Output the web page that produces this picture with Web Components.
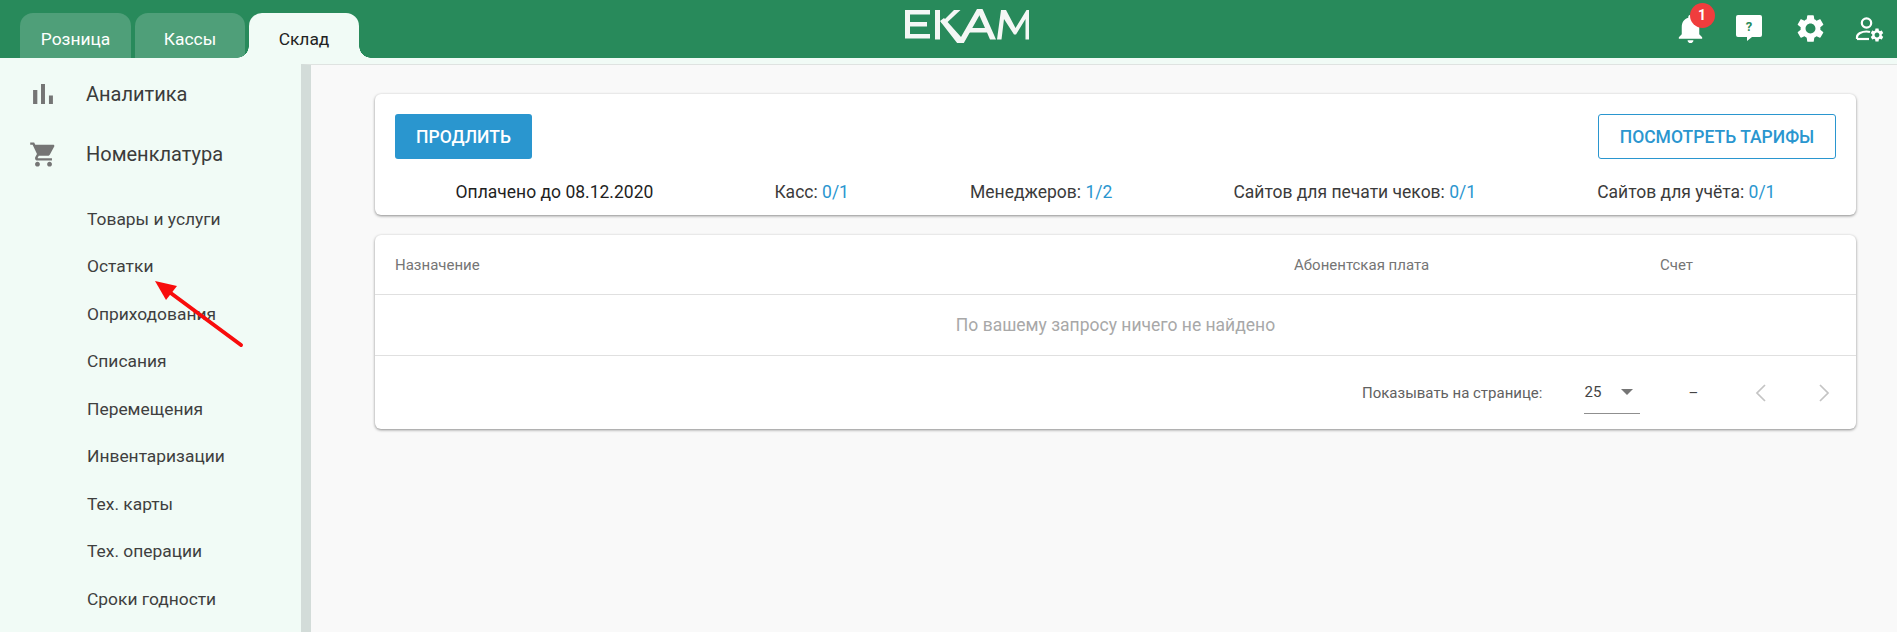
<!DOCTYPE html>
<html lang="ru">
<head>
<meta charset="utf-8">
<title>EKAM</title>
<style>
  html, body { margin: 0; height: 100%; overflow: hidden; }
  body { background: #f1fbf6; font-family: Roboto, "Liberation Sans", sans-serif; color: #333; }
  #app { display: flex; flex-direction: column; height: 632px; position: relative; }
  #columns { display: flex; flex: 1; min-height: 0; padding-top: 6px; }
</style>
</head>
<body>
<div id="app">
  <ek-header></ek-header>
  <div id="columns">
    <ek-sidebar>
      <ek-nav-top icon="bars" size="34">Аналитика</ek-nav-top>
      <ek-nav-top icon="cart" size="29">Номенклатура</ek-nav-top>
      <ek-nav-sub class="first">Товары и услуги</ek-nav-sub>
      <ek-nav-sub>Остатки</ek-nav-sub>
      <ek-nav-sub>Оприходования</ek-nav-sub>
      <ek-nav-sub>Списания</ek-nav-sub>
      <ek-nav-sub>Перемещения</ek-nav-sub>
      <ek-nav-sub>Инвентаризации</ek-nav-sub>
      <ek-nav-sub>Тех. карты</ek-nav-sub>
      <ek-nav-sub>Тех. операции</ek-nav-sub>
      <ek-nav-sub>Сроки годности</ek-nav-sub>
    </ek-sidebar>
    <ek-main>
      <ek-tariff-card></ek-tariff-card>
      <ek-bills-table></ek-bills-table>
    </ek-main>
  </div>
  <ek-arrow></ek-arrow>
</div>

<script>
const ICONS = {
  bars: 'M5 9.2h3V19H5zM10.6 5h2.8v14h-2.8zm5.6 8H19v6h-2.8z',
  cart: 'M7 18c-1.1 0-1.99.9-1.99 2S5.9 22 7 22s2-.9 2-2-.9-2-2-2zM1 2v2h2l3.6 7.59-1.35 2.45c-.16.28-.25.61-.25.96 0 1.1.9 2 2 2h12v-2H7.42c-.14 0-.25-.11-.25-.25l.03-.12.9-1.63h7.45c.75 0 1.41-.41 1.75-1.03l3.58-6.49c.08-.14.12-.31.12-.48 0-.55-.45-1-1-1H5.21l-.94-2H1zm16 16c-1.1 0-1.99.9-1.99 2s.89 2 1.99 2 2-.9 2-2-.9-2-2-2z',
  bell: 'M12 22c1.1 0 2-.9 2-2h-4c0 1.1.9 2 2 2zm6-6v-5c0-3.07-1.63-5.64-4.5-6.32V4c0-.83-.67-1.5-1.5-1.5s-1.5.67-1.5 1.5v.68C7.64 5.36 6 7.92 6 11v5l-2 2v1h16v-1l-2-2z',
  gear: 'M19.14 12.94c.04-.3.06-.61.06-.94 0-.32-.02-.64-.07-.94l2.03-1.58c.18-.14.23-.41.12-.61l-1.92-3.32c-.12-.22-.37-.29-.59-.22l-2.39.96c-.5-.38-1.03-.7-1.62-.94l-.36-2.54c-.04-.24-.24-.41-.48-.41h-3.84c-.24 0-.43.17-.47.41l-.36 2.54c-.59.24-1.13.57-1.62.94l-2.39-.96c-.22-.08-.47 0-.59.22L2.74 8.87c-.12.21-.08.47.12.61l2.03 1.58c-.05.3-.09.63-.09.94s.02.64.07.94l-2.03 1.58c-.18.14-.23.41-.12.61l1.92 3.32c.12.22.37.29.59.22l2.39-.96c.5.38 1.03.7 1.62.94l.36 2.54c.05.24.24.41.48.41h3.84c.24 0 .44-.17.47-.41l.36-2.54c.59-.24 1.13-.56 1.62-.94l2.39.96c.22.08.47 0 .59-.22l1.92-3.32c.12-.22.07-.47-.12-.61l-2.01-1.58zM12 15.6c-1.98 0-3.6-1.62-3.6-3.6s1.62-3.6 3.6-3.6 3.6 1.62 3.6 3.6-1.62 3.6-3.6 3.6z'
};

// top bar: tabs, logo, action icons
class EkHeader extends HTMLElement {
  constructor() {
    super();
    const shadow = this.attachShadow({mode: 'open'});
    shadow.innerHTML = `<style>
      :host { display: flex; height: 58px; background: #288a5b; flex: none; position: relative; }
      .tabs { display: flex; gap: 4px; padding: 13px 0 0 20px; width: 339px; }
      .tab {
        width: 110px; height: 45px; box-sizing: border-box; padding-top: 7px;
        display: flex; align-items: center; justify-content: center;
        font-size: 17.400px; color: #fff; background: #4f9f79;
        border-radius: 13px 13px 0 0; position: relative;
      }
      .tab.first { width: 111px; }
      .tab.active { background: #f1fbf6; color: #222; z-index: 1; }
      .tab.active::before, .tab.active::after {
        content: ''; position: absolute; bottom: 0; width: 12px; height: 12px;
      }
      .tab.active::before { left: -12px; background: radial-gradient(circle at 0 0, transparent 11.5px, #f1fbf6 12px); }
      .tab.active::after { right: -12px; background: radial-gradient(circle at 100% 0, transparent 11.5px, #f1fbf6 12px); }
      .logo { margin: 9px 0 0 540px; width: 130px; height: 34px; }
      .actions { margin-left: auto; display: flex; align-items: flex-start; gap: 30px; padding: 13px 12px 0 0; }
      .action { position: relative; width: 30px; height: 30px; display: flex; align-items: center; justify-content: center; }
      svg { display: block; flex: none; }
      .badge {
        position: absolute; left: 14.500px; top: -10.500px; width: 25px; height: 25px; border-radius: 50%;
        background: #f03d3d; color: #fff; font-size: 14px; font-weight: 700;
        display: flex; align-items: center; justify-content: center;
      }
      .help { margin-left: -2px; }
      .qmark { font: 700 13px Roboto, sans-serif; fill: #288a5b; }
    </style>
    <div class="tabs">
      <div class="tab first">Розница</div>
      <div class="tab">Кассы</div>
      <div class="tab active">Склад</div>
    </div>
    <svg class="logo" viewBox="0 0 130 34" aria-label="EKAM logo">
      <g fill="#f4f7f5">
        <path d="M6 1h25v4.500H11v7.500h17v4.500H11v7.500h20v4.500H6z"/>
        <path d="M36 1h5v29.500h-5z"/>
        <path d="M55 1h6.500L47 14.500l-5-.5z"/>
        <path d="M41 13l4-3 17 19 16-28h6L62 40z" transform="translate(0 -1)"/>
        <path d="M78 1h6l13 29.500h-6l-3-7H68l3-4.500h15z"/>
        <path d="M98 30.500l4-29.500h5l9.500 18 11-18h4v29.500h-5V10l-9.500 15.500h-2L105 10l-2.500 20.500z"/>
      </g>
    </svg>
    <div class="actions">
      <div class="action"><svg width="35" height="35" viewBox="0 0 24 24" fill="#fff"><path d="${ICONS.bell}"/></svg><span class="badge">1</span></div>
      <div class="action"><svg class="help" width="30" height="30" viewBox="0 0 30 30"><path fill="#fff" d="M4 2h22a2 2 0 0 1 2 2v18a2 2 0 0 1-2 2h-8l-5 4v-4H4a2 2 0 0 1-2-2V4a2 2 0 0 1 2-2z"/><text class="qmark" x="15" y="18" text-anchor="middle">?</text></svg></div>
      <div class="action"><svg width="33" height="33" viewBox="0 0 24 24" fill="#fff"><path d="${ICONS.gear}"/></svg></div>
      <div class="action"><svg width="30" height="30" viewBox="0 0 30 30"><circle cx="11.500" cy="10" r="4.700" fill="none" stroke="#fff" stroke-width="2.200"/><path d="M2 26v-2c0-3.500 5-5.500 9.500-5.500 1.500 0 2.500.2 3.500.5" fill="none" stroke="#fff" stroke-width="2.200"/><path d="M2 26h12" stroke="#fff" stroke-width="2.200"/><svg x="14" y="14" width="16" height="16" viewBox="0 0 24 24" fill="#fff"><path d="${ICONS.gear}"/></svg></svg></div>
    </div>`;
  }
}
customElements.define('ek-header', EkHeader);

class EkSidebar extends HTMLElement {
  constructor() {
    super();
    const shadow = this.attachShadow({mode: 'open'});
    shadow.innerHTML = `<style>
      :host { display: block; width: 301px; flex: none; overflow: hidden; background: #f1fbf6; }
      .wrap { display: flex; flex-direction: column; }
    </style><div class="wrap"><slot></slot></div>`;
  }
}
customElements.define('ek-sidebar', EkSidebar);

class EkNavTop extends HTMLElement {
  constructor() {
    super();
    const shadow = this.attachShadow({mode: 'open'});
    const icon = ICONS[this.getAttribute('icon')];
    const size = this.getAttribute('size');
    shadow.innerHTML = `<style>
      :host { display: flex; align-items: center; height: 60px; font-size: 20px; color: #3b3b3b; }
      .box { width: 86px; flex: none; display: flex; justify-content: center; }
      svg { width: ${size}px; height: ${size}px; fill: #757575; flex: none; }
    </style><div class="box"><svg viewBox="0 0 24 24"><path d="${icon}"/></svg></div><slot></slot>`;
  }
}
customElements.define('ek-nav-top', EkNavTop);

class EkNavSub extends HTMLElement {
  constructor() {
    super();
    const shadow = this.attachShadow({mode: 'open'});
    shadow.innerHTML = `<style>
      :host { display: flex; align-items: center; height: 47.5px; padding-left: 87px; font-size: 17.400px; color: #3f3f3f; }
      :host(.first) { margin-top: 11px; }
    </style><slot></slot>`;
  }
}
customElements.define('ek-nav-sub', EkNavSub);

class EkMain extends HTMLElement {
  constructor() {
    super();
    const shadow = this.attachShadow({mode: 'open'});
    shadow.innerHTML = `<style>
      :host {
        display: flex; flex-direction: column; gap: 20px; flex: 1; min-width: 0;
        border-left: 10px solid #d3dcd9; border-top: 1px solid #dfe3e1;
        background: #f9f9f9; padding: 29px 41px 0 64px;
      }
    </style><slot></slot>`;
  }
}
customElements.define('ek-main', EkMain);

class EkTariffCard extends HTMLElement {
  constructor() {
    super();
    const shadow = this.attachShadow({mode: 'open'});
    shadow.innerHTML = `<style>
      :host {
        display: block; background: #fff; border-radius: 6px; height: 121px; box-sizing: border-box;
        padding: 20px 20px 0; box-shadow: 0 1px 3px rgba(0,0,0,.45);
      }
      .buttons { display: flex; justify-content: space-between; }
      .btn {
        height: 45px; box-sizing: border-box; border-radius: 3px; display: flex; align-items: center; justify-content: center;
        font-size: 17.500px; font-weight: 500;
      }
      .fill { width: 137px; background: #2a96cf; color: #fff; }
      .line { width: 238px; background: #fff; color: #2a96cf; border: 1px solid #2a96cf; }
      .stats { display: flex; justify-content: space-around; margin-top: 21px; font-size: 17.500px; line-height: 24px; color: #3b3b3b; }
      .paid { color: #1f1f1f; }
      b { font-weight: 400; color: #2a96cf; }
    </style>
    <div class="buttons"><div class="btn fill">ПРОДЛИТЬ</div><div class="btn line">ПОСМОТРЕТЬ ТАРИФЫ</div></div>
    <div class="stats">
      <span class="paid">Оплачено до 08.12.2020</span>
      <span>Касс: <b>0/1</b></span>
      <span>Менеджеров: <b>1/2</b></span>
      <span>Сайтов для печати чеков: <b>0/1</b></span>
      <span>Сайтов для учёта: <b>0/1</b></span>
    </div>`;
  }
}
customElements.define('ek-tariff-card', EkTariffCard);

class EkBillsTable extends HTMLElement {
  constructor() {
    super();
    const shadow = this.attachShadow({mode: 'open'});
    shadow.innerHTML = `<style>
      :host { display: block; background: #fff; border-radius: 6px; box-shadow: 0 1px 3px rgba(0,0,0,.45); }
      .head {
        display: grid; grid-template-columns: 899px 366px 1fr; align-items: center; height: 59px;
        padding-left: 20px; font-size: 15px; color: #757575; border-bottom: 1px solid #e0e0e0;
      }
      .empty {
        height: 60px; display: flex; align-items: center; justify-content: center;
        font-size: 17.500px; color: #a8a8a8; border-bottom: 1px solid #e0e0e0;
      }
      .foot { height: 73px; display: flex; align-items: center; font-size: 15px; color: #616161; padding-left: 987px; }
      .select {
        width: 56px; height: 43px; box-sizing: border-box; margin-left: 42px; display: flex; align-items: center;
        border-bottom: 1px solid #8f8f8f; color: #444; font-size: 15px;
      }
      .caret { width: 0; height: 0; border: 6px solid transparent; border-top: 6px solid #757575; border-bottom: 0; margin-left: 20px; }
      .range { margin-left: 48px; width: 57px; color: #444; }
      svg { width: 32px; height: 32px; fill: none; stroke: #c4c4c4; stroke-width: 1.300; }
      .next { margin-left: 31px; }
    </style>
    <div class="head"><span>Назначение</span><span>Абонентская плата</span><span>Счет</span></div>
    <div class="empty">По вашему запросу ничего не найдено</div>
    <div class="foot">
      <span>Показывать на странице:</span>
      <div class="select">25<span class="caret"></span></div>
      <span class="range">–</span>
      <svg viewBox="0 0 24 24"><path d="M15 6l-6 6 6 6"/></svg>
      <svg class="next" viewBox="0 0 24 24"><path d="M9 6l6 6-6 6"/></svg>
    </div>`;
  }
}
customElements.define('ek-bills-table', EkBillsTable);

// red annotation arrow drawn over the sidebar
class EkArrow extends HTMLElement {
  constructor() {
    super();
    const shadow = this.attachShadow({mode: 'open'});
    shadow.innerHTML = `<style>
      :host { position: absolute; left: 150px; top: 275px; width: 100px; height: 80px; pointer-events: none; }
    </style>
    <svg width="100" height="80" viewBox="0 0 100 80">
      <path d="M91 70L18 16" stroke="#f80c0c" stroke-width="4" stroke-linecap="round"/>
      <path d="M5 6L27 11L16 25z" fill="#f80c0c"/>
    </svg>`;
  }
}
customElements.define('ek-arrow', EkArrow);
</script>
</body>
</html>
